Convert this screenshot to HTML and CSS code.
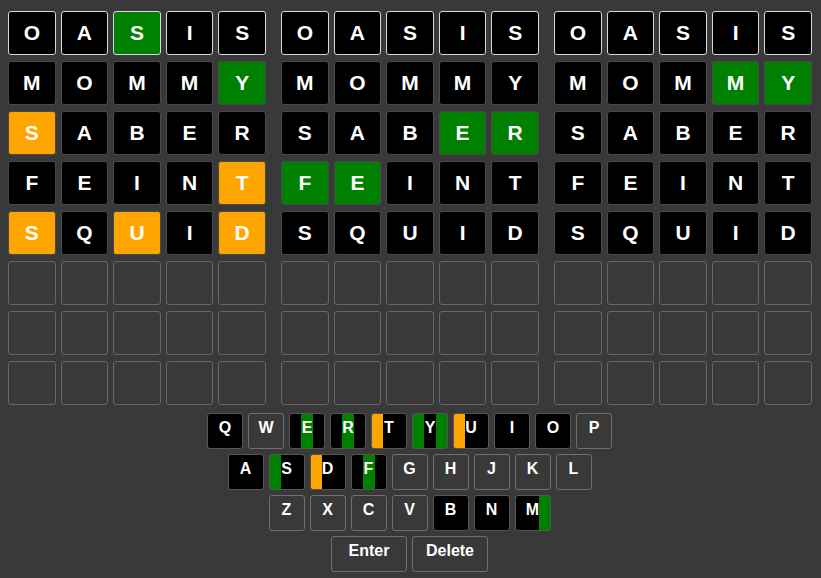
FILE: index.html
```html
<!DOCTYPE html>
<html lang="en">
<head>
    <meta charset="UTF-8">
    <meta name="viewport" content="width=device-width, initial-scale=1.0">
    <title>Trordle</title>
    <link rel="stylesheet" href="styles.css">
</head>
<body>
    <div class="boards" id="boards"></div>

    <div class="keyboard" id="keyboard">
        <div class="key-row">
            <button class="key">Q</button><button class="key">W</button><button class="key">E</button><button class="key">R</button><button class="key">T</button><button class="key">Y</button><button class="key">U</button><button class="key">I</button><button class="key">O</button><button class="key">P</button>
        </div>
        <div class="key-row">
            <button class="key">A</button><button class="key">S</button><button class="key">D</button><button class="key">F</button><button class="key">G</button><button class="key">H</button><button class="key">J</button><button class="key">K</button><button class="key">L</button>
        </div>
        <div class="key-row">
            <button class="key">Z</button><button class="key">X</button><button class="key">C</button><button class="key">V</button><button class="key">B</button><button class="key">N</button><button class="key">M</button>
        </div>
        <div class="key-row">
            <button class="key wide">Enter</button><button class="key wide">Delete</button>
        </div>
    </div>

    <script>
        const guesses = ["OASIS", "MOMMY", "SABER", "FEINT", "SQUID"];
        // g = right spot, y = in word, x = not in word
        const results = [
            ["xxgxx", "xxxxg", "yxxxx", "xxxxy", "yxyxy"],
            ["xxxxx", "xxxxx", "xxxgg", "ggxxx", "xxxxx"],
            ["xxxxx", "xxxgg", "xxxxx", "xxxxx", "xxxxx"]
        ];
        const ROWS = 8;
        const colors = { g: "#008000", y: "#ffa500", x: "#000" };
        const rank = { x: 1, y: 2, g: 3 };

        const boardsDiv = document.getElementById("boards");
        const keyState = {};

        results.forEach((board, b) => {
            const boardDiv = document.createElement("div");
            boardDiv.classList.add("board");
            for (let r = 0; r < ROWS; r++) {
                for (let c = 0; c < 5; c++) {
                    const tile = document.createElement("div");
                    tile.classList.add("tile");
                    if (r < guesses.length) {
                        const letter = guesses[r][c];
                        const s = board[r][c];
                        tile.textContent = letter;
                        tile.classList.add("filled", "state-" + s);
                        if (r === 0) tile.classList.add("first");
                        if (!keyState[letter]) keyState[letter] = ["x", "x", "x"];
                        if (rank[s] > rank[keyState[letter][b]]) keyState[letter][b] = s;
                    }
                    boardDiv.appendChild(tile);
                }
            }
            boardsDiv.appendChild(boardDiv);
        });

        document.querySelectorAll(".key").forEach(key => {
            const st = keyState[key.textContent];
            if (!st) return;
            key.classList.add("used");
            const [a, m, z] = st.map(s => colors[s]);
            key.style.background = `linear-gradient(to right, ${a} 0 33.33%, ${m} 33.33% 66.67%, ${z} 66.67%)`;
        });
    </script>
</body>
</html>
```

FILE: styles.css
```css
body {
    font-family: "Liberation Sans", Arial, sans-serif;
    margin: 0;
    padding: 11px 9px 0 8px;
    background-color: #393939;
    color: white;
}
.boards {
    display: flex;
    gap: 15px;
}
.board {
    flex: 1;
    display: grid;
    grid-template-columns: repeat(5, 1fr);
    column-gap: 5px;
    row-gap: 6px;
}
.tile {
    height: 44px;
    box-sizing: border-box;
    border: 1px solid #666;
    border-radius: 3px;
    display: flex;
    align-items: center;
    justify-content: center;
    font-size: 21px;
    font-weight: bold;
}
.tile.filled {
    border-color: #4a4a4a;
}
.tile.first {
    border-color: #d8d8d8;
}
.state-x {
    background-color: #000;
}
.state-g {
    background-color: #008000;
}
.state-y {
    background-color: #ffa500;
}
.keyboard {
    margin: 8px 0 0 -1px;
    display: flex;
    flex-direction: column;
    align-items: center;
    gap: 5px;
}
.key-row {
    display: flex;
    gap: 5px;
}
.key {
    width: 36px;
    height: 36px;
    box-sizing: border-box;
    padding: 0 0 7px;
    margin: 0;
    border: 1px solid #707070;
    border-radius: 3px;
    background-color: transparent;
    color: white;
    font-family: "Liberation Sans", Arial, sans-serif;
    font-size: 16px;
    font-weight: bold;
    display: flex;
    align-items: center;
    justify-content: center;
    cursor: pointer;
}
.key.used {
    border-color: #555;
}
.key.wide {
    width: 76px;
}
```
